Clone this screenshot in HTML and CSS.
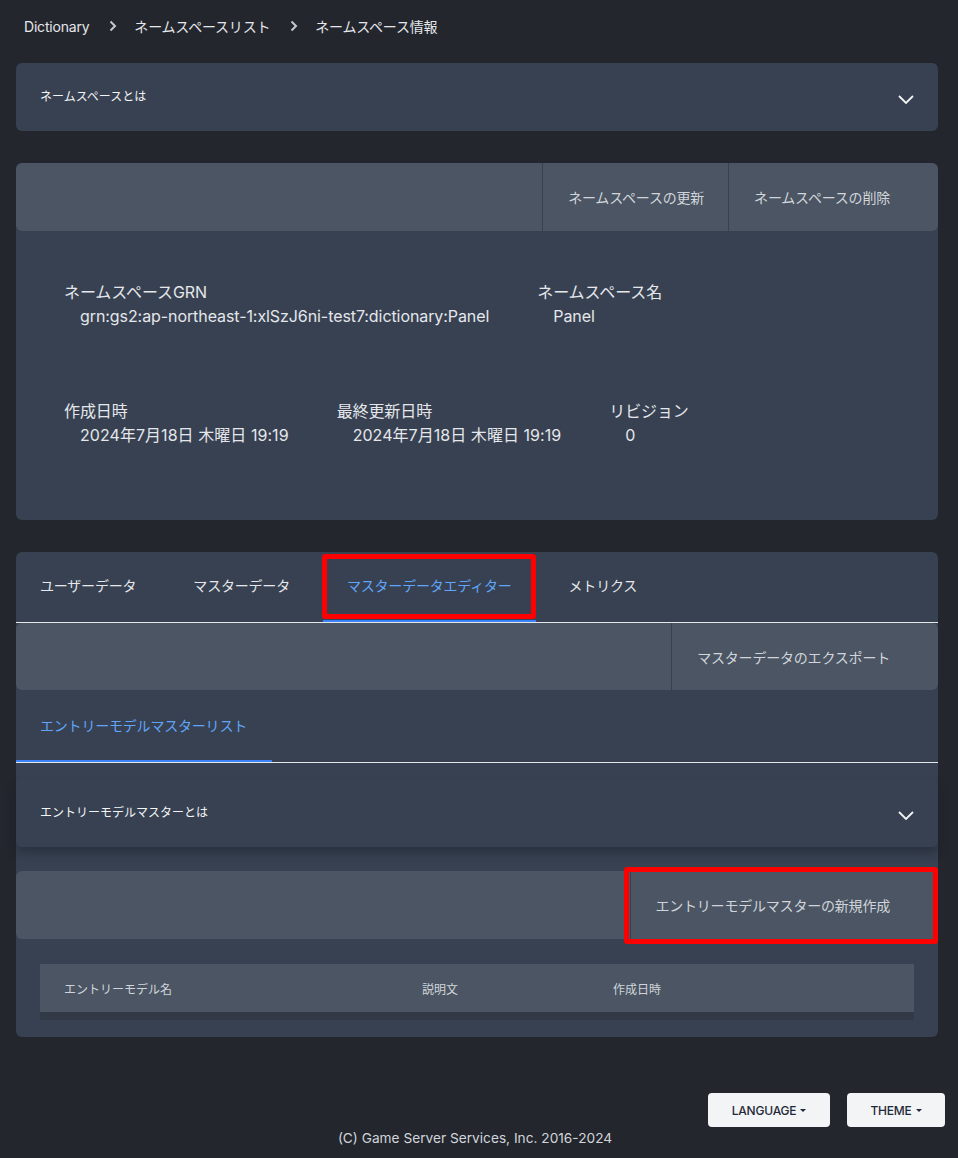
FILE: index.html
```html
<!DOCTYPE html>
<html lang="ja">
<head>
<meta charset="utf-8">
<title>Dictionary - ネームスペース情報</title>
<link rel="stylesheet" href="styles.css">
</head>
<body>
<div class="page">
  <nav class="breadcrumb">
    <span class="crumb">Dictionary</span>
    <svg class="sep" width="8" height="12" viewBox="0 0 8 12"><polyline points="1.5,1.5 6,6 1.5,10.5" fill="none" stroke="#c4c8cf" stroke-width="2"/></svg>
    <span class="crumb">ネームスペースリスト</span>
    <svg class="sep" width="8" height="12" viewBox="0 0 8 12"><polyline points="1.5,1.5 6,6 1.5,10.5" fill="none" stroke="#c4c8cf" stroke-width="2"/></svg>
    <span class="crumb">ネームスペース情報</span>
  </nav>

  <section class="card collapse">
    <span class="collapse-title">ネームスペースとは</span>
    <svg class="chevron" width="16" height="9" viewBox="0 0 16 9"><polyline points="1,1 8,8 15,1" fill="none" stroke="#f3f4f6" stroke-width="1.8"/></svg>
  </section>

  <section class="card info-card">
    <div class="toolbar">
      <button class="tool-btn">ネームスペースの更新</button>
      <button class="tool-btn">ネームスペースの削除</button>
    </div>
    <div class="info">
      <div class="info-row">
        <div class="field">
          <div class="label">ネームスペースGRN</div>
          <div class="value">grn:gs2:ap-northeast-1:xlSzJ6ni-test7:dictionary:Panel</div>
        </div>
        <div class="field">
          <div class="label">ネームスペース名</div>
          <div class="value">Panel</div>
        </div>
      </div>
      <div class="info-row">
        <div class="field">
          <div class="label">作成日時</div>
          <div class="value">2024年7月18日 木曜日 19:19</div>
        </div>
        <div class="field">
          <div class="label">最終更新日時</div>
          <div class="value">2024年7月18日 木曜日 19:19</div>
        </div>
        <div class="field">
          <div class="label">リビジョン</div>
          <div class="value">0</div>
        </div>
      </div>
    </div>
  </section>

  <section class="card tab-card">
    <div class="tabs">
      <div class="tab">ユーザーデータ</div>
      <div class="tab">マスターデータ</div>
      <div class="tab active">マスターデータエディター<span class="mark mark-tab"></span></div>
      <div class="tab">メトリクス</div>
    </div>
    <div class="toolbar toolbar-flat">
      <button class="tool-btn">マスターデータのエクスポート</button>
    </div>
    <div class="subtabs">
      <div class="tab active sub">エントリーモデルマスターリスト</div>
    </div>
    <div class="sub-body">
      <div class="card collapse inner">
        <span class="collapse-title">エントリーモデルマスターとは</span>
        <svg class="chevron" width="16" height="9" viewBox="0 0 16 9"><polyline points="1,1 8,8 15,1" fill="none" stroke="#f3f4f6" stroke-width="1.8"/></svg>
      </div>
      <div class="toolbar toolbar-new">
        <button class="tool-btn">エントリーモデルマスターの新規作成</button>
        <span class="mark mark-btn"></span>
      </div>
      <div class="table">
        <div class="thead">
          <div class="th">エントリーモデル名</div>
          <div class="th">説明文</div>
          <div class="th">作成日時</div>
        </div>
        <div class="tbody"></div>
      </div>
    </div>
  </section>

  <footer class="footer">
    <div class="footer-btns">
      <button class="pill">LANGUAGE<span class="caret"></span></button>
      <button class="pill">THEME<span class="caret"></span></button>
    </div>
    <div class="copy">(C) Game Server Services, Inc. 2016-2024</div>
  </footer>
</div>
</body>
</html>
```

FILE: styles.css
```css
* { box-sizing: border-box; }
html, body {
  margin: 0;
  padding: 0;
  background: #23262d;
}
body {
  font-family: "Inter", "Noto Sans CJK JP", "Noto Sans", sans-serif;
  color: #e5e7eb;
  width: 958px;
  height: 1158px;
  overflow: hidden;
}
.page {
  width: 922px;
  margin-left: 16px;
}
.breadcrumb {
  height: 52px;
  display: flex;
  align-items: center;
  padding-left: 8px;
  font-size: 14px;
  color: #e5e7eb;
  margin-bottom: 11px;
  letter-spacing: -0.2px;
}
.breadcrumb .sep { margin: 0 17px 0 20px; }

.card {
  background: #374151;
  border-radius: 6px;
}
.collapse {
  height: 68px;
  display: flex;
  align-items: center;
  justify-content: space-between;
  padding: 0 24px 0 24px;
}
.collapse-title {
  font-size: 12px;
  color: #f3f4f6;
  margin-top: -4px;
}
.chevron { margin-top: 4px; margin-right: 0; }

.info-card { margin-top: 32px; }
.toolbar {
  height: 68px;
  background: #4b5563;
  border-radius: 6px;
  display: flex;
  justify-content: flex-end;
  padding-right: 24px;
}
.tool-btn {
  background: transparent;
  border: none;
  border-left: 1px solid #374151;
  color: #d1d5db;
  font-family: inherit;
  font-size: 14px;
  letter-spacing: -0.2px;
  padding: 0 24px 0 25px;
  height: 100%;
  cursor: pointer;
}
.info {
  padding: 49px 24px 73px;
  display: flex;
  flex-direction: column;
  gap: 71px;
}
.info-row { display: flex; }
.field { padding: 0 24px; }
.label {
  font-size: 16px;
  line-height: 24px;
  color: #e5e7eb;
  letter-spacing: -0.1px;
}
.value {
  font-size: 16px;
  line-height: 24px;
  padding-left: 16px;
  color: #e5e7eb;
}
.info-row:first-child .value { letter-spacing: -0.08px; }
.info-row:last-child .value { letter-spacing: 0.05px; }

.tab-card { margin-top: 32px; padding-bottom: 17px; }
.tabs {
  display: flex;
  gap: 9px;
  height: 71px;
  border-bottom: 1px solid #e5e7eb;
}
.tab {
  position: relative;
  padding: 0 24px 3px;
  font-size: 14px;
  letter-spacing: -0.2px;
  color: #e5e7eb;
  display: flex;
  align-items: center;
  height: 70px;
  border-bottom: 2px solid transparent;
}
.tab.active {
  color: #60a5fa;
  border-bottom-color: #3b82f6;
}
.toolbar-flat { height: 67px; }
.subtabs {
  height: 73px;
  border-bottom: 1px solid #e5e7eb;
  display: flex;
}
.tab.sub { height: 72px; padding: 0 25px 1px 24px; }

.sub-body { padding-top: 16px; }
.inner {
  box-shadow: 0 6px 10px rgba(20, 24, 32, 0.35);
}
.toolbar-new {
  position: relative;
  margin-top: 24px;
}
.toolbar-new .tool-btn { padding: 0 24px 0 24px; }

.mark {
  position: absolute;
  border: 5px solid #ff0000;
  border-radius: 3px;
  pointer-events: none;
}
.mark-tab {
  left: -1px;
  top: 2px;
  width: 214px;
  height: 65px;
}
.mark-btn {
  right: 0;
  top: -4px;
  width: 314px;
  height: 77px;
}

.table {
  margin: 25px 24px 0;
}
.thead {
  height: 48px;
  background: #4b5563;
  display: grid;
  grid-template-columns: 358px 191px 1fr;
  align-items: center;
}
.th {
  font-size: 12px;
  color: #d1d5db;
  padding-left: 24px;
}
.tbody {
  height: 8px;
  background: #323a47;
}

.footer {
  margin-top: 55px;
}
.footer-btns {
  display: flex;
  justify-content: flex-end;
  gap: 17px;
  margin-right: -7px;
  padding-top: 1px;
}
.pill {
  height: 34px;
  background: #f3f4f6;
  border: none;
  border-radius: 4px;
  font-family: "Inter", "Roboto", sans-serif;
  font-size: 12px;
  font-weight: 500;
  color: #1f2937;
  display: flex;
  align-items: center;
  justify-content: center;
  letter-spacing: -0.2px;
}
.pill:first-child { width: 122px; }
.pill:last-child { width: 98px; }
.caret {
  display: inline-block;
  margin-left: 4px;
  width: 0;
  height: 0;
  border-left: 3px solid transparent;
  border-right: 3px solid transparent;
  border-top: 3px solid #1f2937;
}
.copy {
  text-align: center;
  font-size: 13.7px;
  color: #d1d5db;
  margin-top: 3px;
  margin-left: -4px;
}
```
